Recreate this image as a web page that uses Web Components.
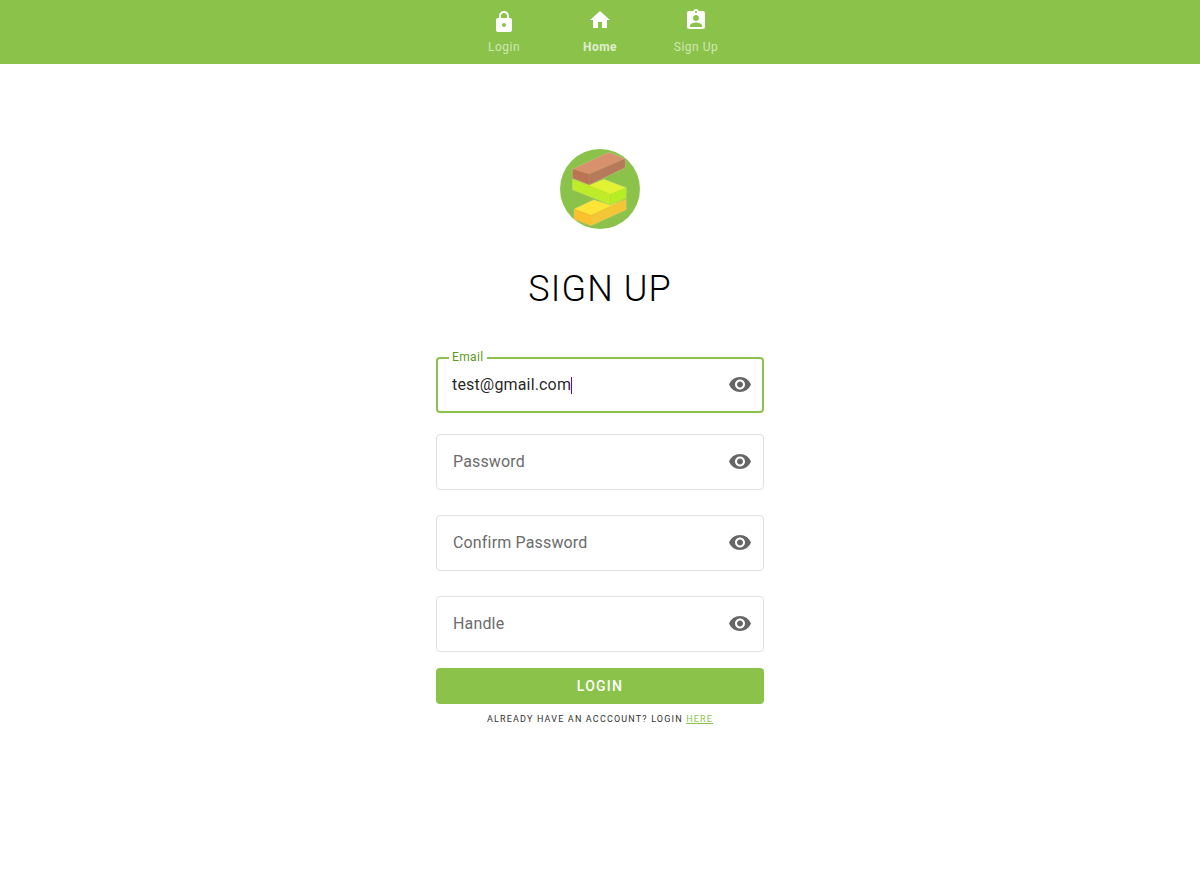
<!DOCTYPE html>
<html lang="en">
<head>
<meta charset="utf-8">
<meta name="viewport" content="width=device-width, initial-scale=1">
<title>Sign Up</title>
<style>
  body { margin: 0; background: #fff; font-family: Roboto, "Liberation Sans", sans-serif; }
</style>
</head>
<body>
<sign-up-page></sign-up-page>

<template id="nav-tab">
  <style>
    :host { display: block; width: 96px; color: #fff; }
    a { display: flex; flex-direction: column; align-items: center; gap: 8px; padding-top: 8px; color: inherit; text-decoration: none; }
    svg { display: block; width: 24px; height: 24px; fill: currentColor; }
    span { font-size: 12px; line-height: 14px; letter-spacing: 0.04em; color: rgba(255, 255, 255, 0.6); }
    :host([current]) span { font-weight: 700; color: rgba(255, 255, 255, 0.74); }
  </style>
  <a href="#"><svg viewBox="0 0 24 24" aria-hidden="true"><path/></svg><span><slot></slot></span></a>
</template>

<template id="nav-bar">
  <style>
    :host { display: block; background: #8bc34a; }
    nav { display: flex; justify-content: center; height: 64px; }
  </style>
  <nav aria-label="Main"><slot></slot></nav>
</template>

<template id="brand-logo">
  <style>
    :host { display: block; width: 80px; height: 80px; }
    svg { display: block; width: 100%; height: 100%; }
  </style>
  <svg viewBox="33 27 240 240" role="img" aria-label="Stacked bricks logo">
    <circle cx="153" cy="147" r="120" fill="#8bc34a"/>
    <path fill="#ffe438" d="M75 207 134 179 184 195 232 177 126 226Z"/>
    <path fill="#fbc02d" d="M75 207 126 226V257L75 238Z"/>
    <path fill="#f4c534" d="M126 226 232 177V209L126 257Z"/>
    <path fill="#e2f333" d="M70 117 121 135 165 118 232 143 184 163Z"/>
    <path fill="#bfec29" d="M70 117 184 163V195L70 149Z"/>
    <path fill="#b8ec24" d="M184 163 232 143V175L184 195Z"/>
    <path fill="#d9906c" d="M70 87 180 37 229 56 121 103Z"/>
    <path fill="#bc7454" d="M70 87 121 103V135L70 115Z"/>
    <path fill="#b67a5b" d="M121 103 229 56V83L121 135Z"/>
    <g fill="none" stroke="#c9c9a0" stroke-width="2" opacity=".6">
      <path d="M70 87 180 37 229 56V83L121 135 70 115Z"/>
      <path d="M70 117V149L184 195 232 175V143L165 118"/>
      <path d="M134 179 75 207V238L126 257 232 209V177"/>
    </g>
  </svg>
</template>

<template id="outlined-field">
  <style>
    :host { display: block; }
    .box { position: relative; box-sizing: border-box; display: flex; align-items: center; height: 56px; padding: 0 11px 0 15px; border: 1px solid #e0e0e0; border-radius: 4px; background: #fff; }
    .box.filled { border: 2px solid #8bc34a; padding: 0 10px 0 14px; }
    .entry { display: flex; align-items: center; flex: 1; min-width: 0; }
    input { min-width: 0; width: 100%; height: 24px; padding: 0; border: 0; outline: 0; background: none; font: 16px/24px Roboto, "Liberation Sans", sans-serif; letter-spacing: 0.01em; color: rgba(0, 0, 0, 0.87); }
    .filled input { width: auto; field-sizing: content; caret-color: transparent; }
    .caret { display: none; width: 1px; height: 17px; background: #6200ee; }
    .filled .caret { display: block; }
    label { position: absolute; left: 16px; top: 15px; font-size: 16px; line-height: 24px; letter-spacing: 0.01em; color: #6b6b6b; pointer-events: none; }
    .filled label { left: 11px; top: -9px; padding: 0 3px; background: #fff; font-size: 12px; line-height: 14px; letter-spacing: 0.03em; color: #5a9a1c; }
    button { display: block; padding: 0; border: 0; background: none; color: #666; cursor: pointer; }
    svg { display: block; width: 24px; height: 24px; fill: currentColor; }
  </style>
  <div class="box">
    <label for="entry"></label>
    <div class="entry"><input id="entry"><span class="caret"></span></div>
    <button type="button" aria-label="Toggle visibility">
      <svg viewBox="0 0 24 24" aria-hidden="true"><path d="M12 4C7 4 2.73 7.11 1 11.5c1.73 4.39 6 7.5 11 7.5s9.27-3.11 11-7.5c-1.73-4.39-6-7.5-11-7.5zM12 16.5c-2.76 0-5-2.24-5-5s2.24-5 5-5 5 2.24 5 5-2.24 5-5 5zm0-8c-1.66 0-3 1.34-3 3s1.34 3 3 3 3-1.34 3-3-1.34-3-3-3z"/></svg>
    </button>
  </div>
</template>

<template id="primary-button">
  <style>
    :host { display: block; }
    button { display: block; width: 100%; height: 36px; padding: 0; border: 0; border-radius: 4px; background: #8bc34a; color: #fff; font: 500 14px/36px Roboto, "Liberation Sans", sans-serif; letter-spacing: 0.09em; cursor: pointer; }
  </style>
  <button type="button"><slot></slot></button>
</template>

<template id="sign-up-page">
  <style>
    :host { display: block; }
    main { display: flex; flex-direction: column; align-items: center; padding: 85px 16px 0; }
    h1 { margin: 38px 0 46px; font-size: 36px; line-height: 44px; font-weight: 300; letter-spacing: 0.03em; color: #000; }
    form { width: 100%; max-width: 328px; }
    .details { display: grid; gap: 25px; margin: 21px 0 16px; }
    p { margin: 8px 0 0; text-align: center; font-size: 9px; line-height: 14px; letter-spacing: 0.13em; color: #333; }
    a { color: #8bc34a; }
  </style>
  <nav-bar>
    <nav-tab icon="lock">Login</nav-tab>
    <nav-tab icon="home" current>Home</nav-tab>
    <nav-tab icon="badge">Sign Up</nav-tab>
  </nav-bar>
  <main>
    <brand-logo></brand-logo>
    <h1>SIGN UP</h1>
    <form>
      <outlined-field label="Email" type="text" value="test@gmail.com"></outlined-field>
      <div class="details">
        <outlined-field label="Password" type="password"></outlined-field>
        <outlined-field label="Confirm Password" type="password"></outlined-field>
        <outlined-field label="Handle" type="text"></outlined-field>
      </div>
      <primary-button>LOGIN</primary-button>
      <p>ALREADY HAVE AN ACCCOUNT? LOGIN <a href="#">HERE</a></p>
    </form>
  </main>
</template>

<script>
  const ICONS = {
    lock: 'M18 10h-1V8c0-2.76-2.24-5-5-5S7 5.24 7 8v2H6c-1.1 0-2 .9-2 2v10c0 1.1.9 2 2 2h12c1.1 0 2-.9 2-2V12c0-1.1-.9-2-2-2zm-6 9c-1.1 0-2-.9-2-2s.9-2 2-2 2 .9 2 2-.9 2-2 2zm3.1-9H8.9V8c0-1.71 1.39-3.1 3.1-3.1 1.71 0 3.1 1.39 3.1 3.1v2z',
    home: 'M10 20v-6h4v6h5v-8h3L12 3 2 12h3v8z',
    badge: 'M19 3h-4.18C14.4 1.84 13.3 1 12 1c-1.3 0-2.4.84-2.82 2H5c-1.1 0-2 .9-2 2v14c0 1.1.9 2 2 2h14c1.1 0 2-.9 2-2V5c0-1.1-.9-2-2-2zm-7 0c.55 0 1 .45 1 1s-.45 1-1 1-1-.45-1-1 .45-1 1-1zm0 4c1.66 0 3 1.34 3 3s-1.34 3-3 3-3-1.34-3-3 1.34-3 3-3zm6 12H6v-1.4c0-2 4-3.1 6-3.1s6 1.1 6 3.1V19z'
  };

  class TemplateElement extends HTMLElement {
    constructor() {
      super();
      this.attachShadow({ mode: 'open' });
    }
    connectedCallback() {
      if (this.shadowRoot.childNodes.length) return;
      const source = document.getElementById(this.localName);
      this.shadowRoot.append(document.importNode(source.content, true));
      this.setup();
    }
    setup() {}
  }

  customElements.define('nav-bar', class extends TemplateElement {});
  customElements.define('brand-logo', class extends TemplateElement {});
  customElements.define('primary-button', class extends TemplateElement {});

  customElements.define('nav-tab', class extends TemplateElement {
    setup() {
      this.shadowRoot.querySelector('path').setAttribute('d', ICONS[this.getAttribute('icon')]);
      if (this.hasAttribute('current')) this.shadowRoot.querySelector('a').setAttribute('aria-current', 'page');
    }
  });

  customElements.define('outlined-field', class extends TemplateElement {
    setup() {
      const input = this.shadowRoot.querySelector('input');
      const box = this.shadowRoot.querySelector('.box');
      const update = () => box.classList.toggle('filled', input.value !== '');
      this.shadowRoot.querySelector('label').textContent = this.getAttribute('label');
      input.type = this.getAttribute('type') || 'text';
      input.value = this.getAttribute('value') || '';
      input.addEventListener('input', update);
      update();
    }
  });

  customElements.define('sign-up-page', class extends TemplateElement {});
</script>
</body>
</html>
